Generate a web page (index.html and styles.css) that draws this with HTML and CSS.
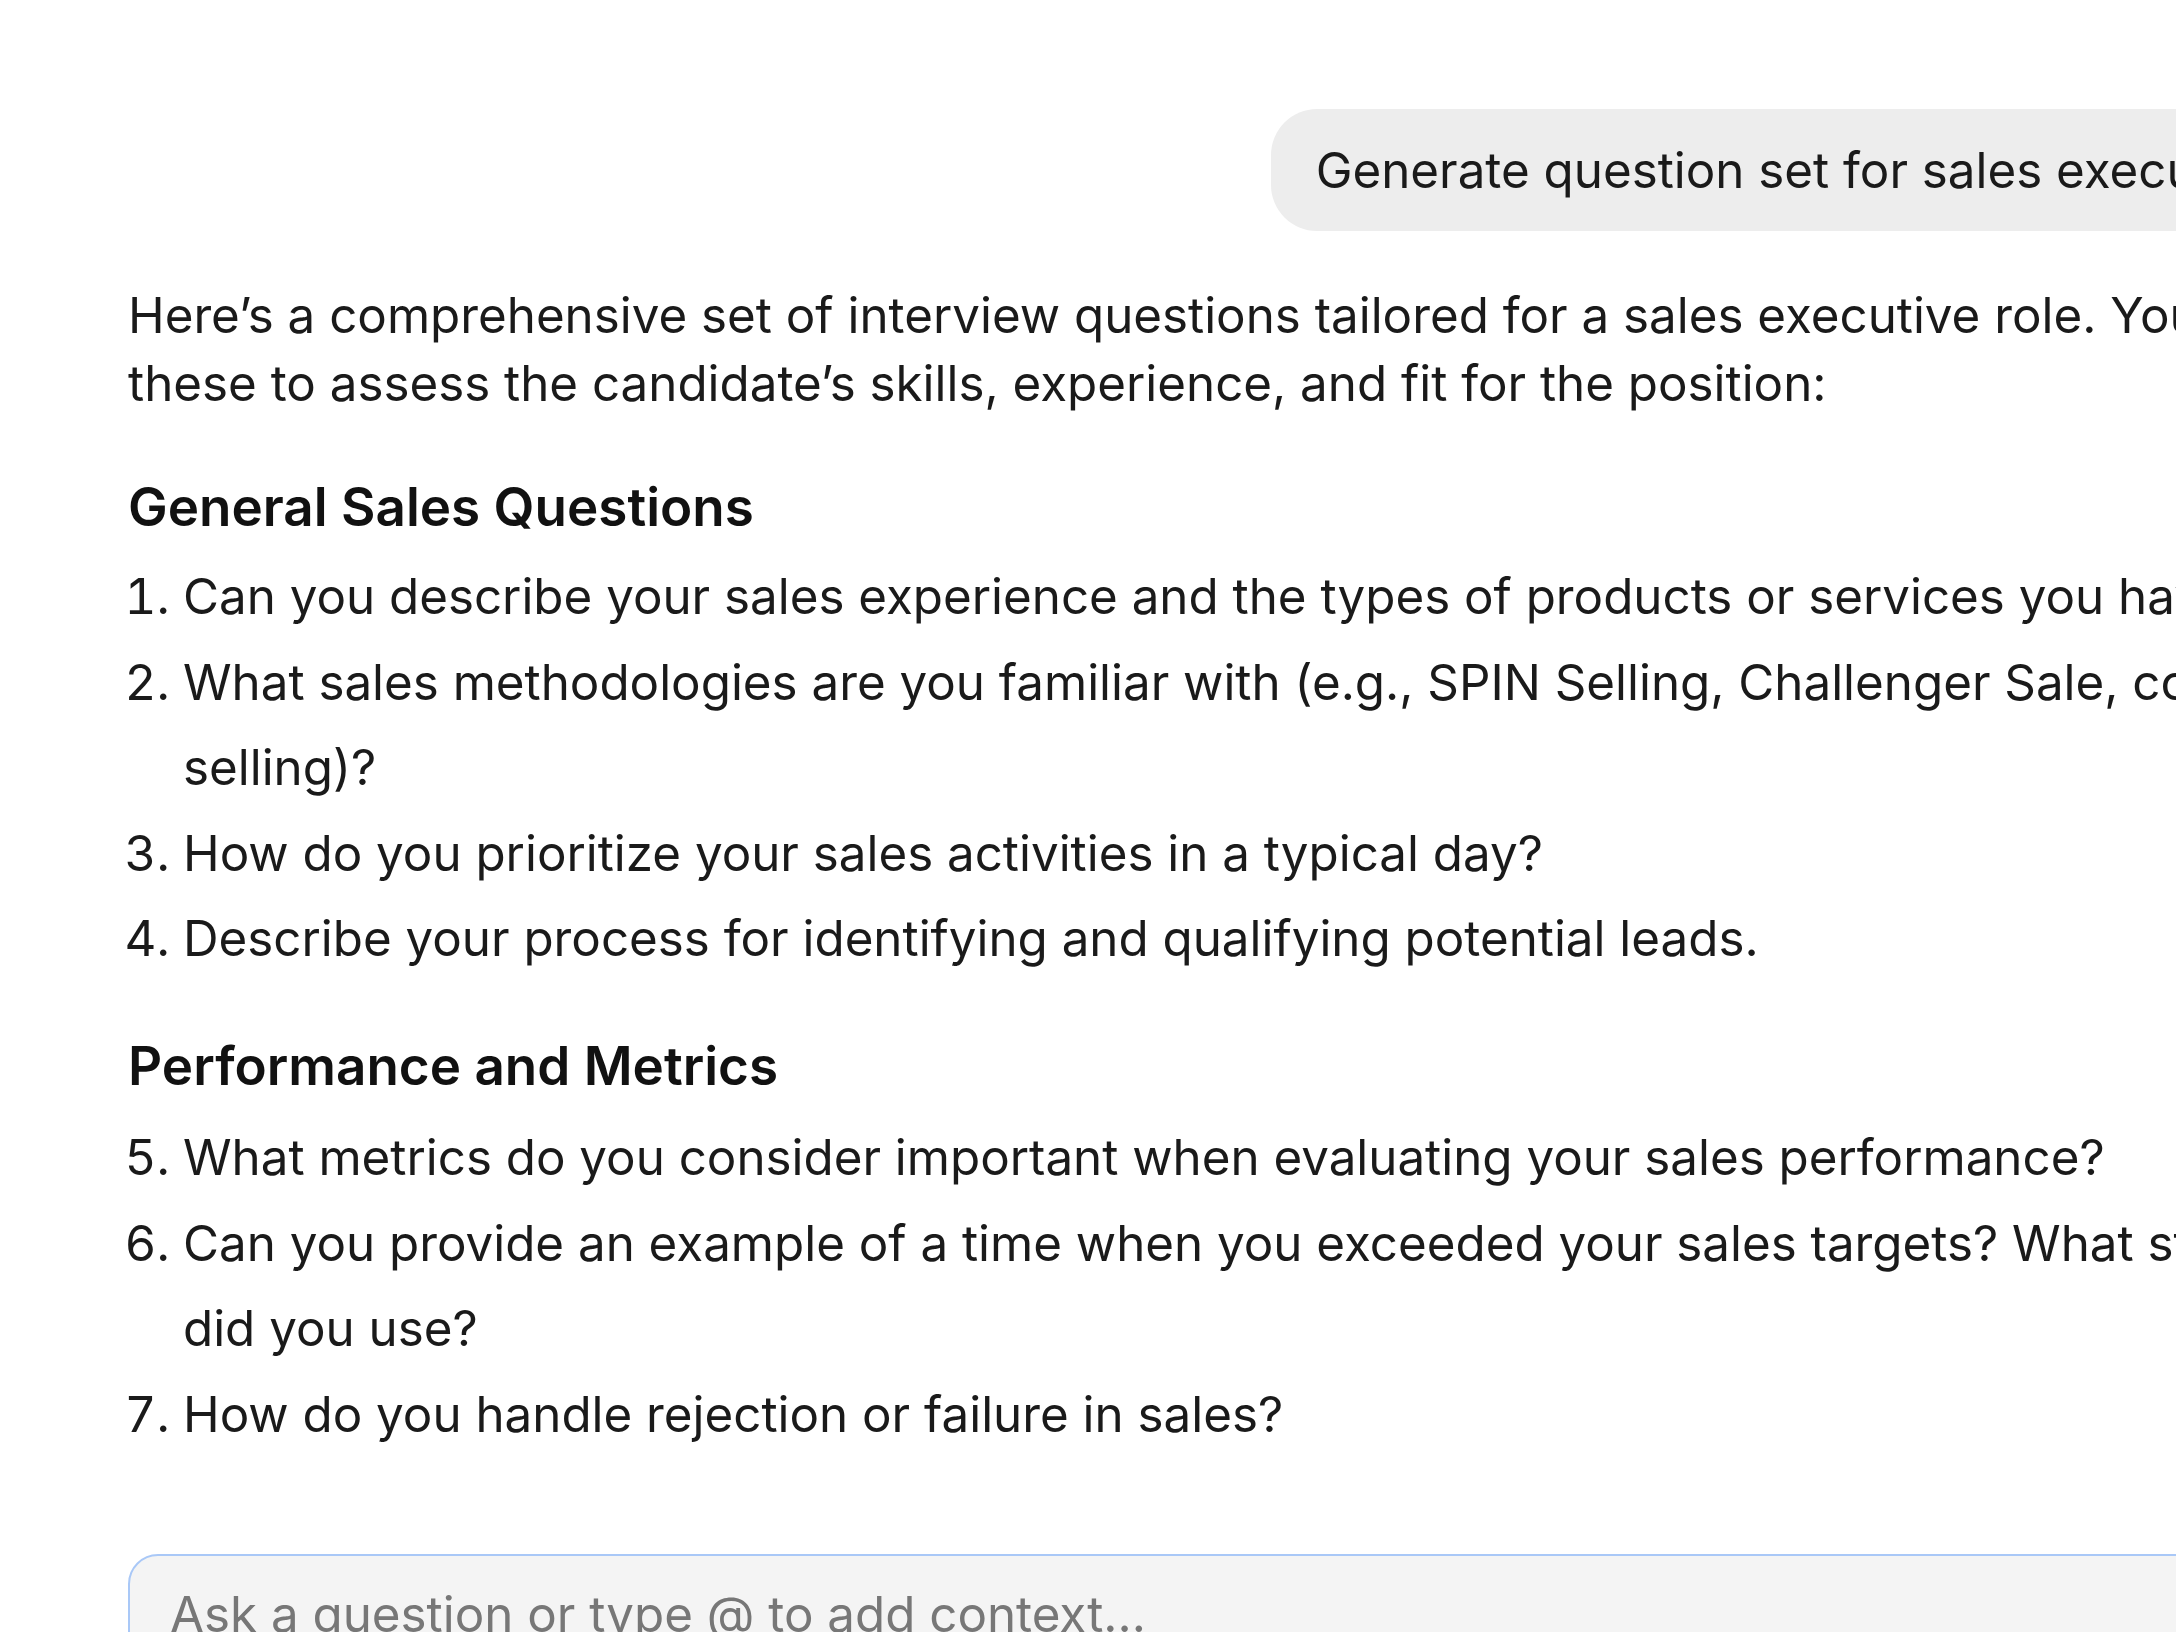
FILE: index.html
```html
<!doctype html>
<html>
  <head>
    <meta charset="utf-8">
    <title>Chat</title>
    <link rel="stylesheet" href="styles.css">
  </head>
  <body>
    <div class="thread">
      <div class="user-row">
        <div class="bubble">Generate question set for sales executive role</div>
      </div>

      <div class="answer">
        <p>Here’s a comprehensive set of interview questions tailored for a sales executive role. You can use these to assess the candidate’s skills, experience, and fit for the position:</p>

        <h3>General Sales Questions</h3>
        <ol>
          <li>Can you describe your sales experience and the types of products or services you have sold?</li>
          <li>What sales methodologies are you familiar with (e.g., SPIN Selling, Challenger Sale, consultative selling)?</li>
          <li>How do you prioritize your sales activities in a typical day?</li>
          <li>Describe your process for identifying and qualifying potential leads.</li>
        </ol>

        <h3>Performance and Metrics</h3>
        <ol start="5">
          <li>What metrics do you consider important when evaluating your sales performance?</li>
          <li>Can you provide an example of a time when you exceeded your sales targets? What strategies did you use?</li>
          <li>How do you handle rejection or failure in sales?</li>
        </ol>
      </div>

      <div class="composer">
        <div class="placeholder">Ask a question or type @ to add context...</div>
      </div>
    </div>
  </body>
</html>
```

FILE: styles.css
```css
html, body {
  margin: 0;
  padding: 0;
  background: #fff;
  overflow: hidden;
}

body {
  color: #1a1a1a;
  font: 49.3px/68px Inter, "Liberation Sans", sans-serif;
  height: 1632px;
}

.thread {
  width: 2334px;
  margin-left: 128px;
  padding-top: 109px;
}

.user-row {
  display: flex;
  justify-content: flex-end;
}
.bubble {
  background: #ededed;
  border-radius: 46px;
  padding: 27px 81px 27px 45px;
  line-height: 68px;
  white-space: nowrap;
}

.answer p {
  margin: 50px 0 0;
}

.answer h3 {
  color: #111;
  font-size: 53px;
  font-weight: 600;
  line-height: 68px;
  margin: 56px 0 13px;
}

.answer ol {
  margin: 0;
  padding-left: 55px;
  line-height: 85.6px;
}
.answer ol + h3 {
  margin-top: 50px;
  margin-bottom: 15px;
}

.composer {
  margin-top: 97px;
  background: #f4f4f4;
  border: 2px solid #a9c8f7;
  border-radius: 30px;
  height: 200px;
  padding: 33px 40px;
}
.placeholder {
  color: #777;
  line-height: 50px;
}
```
